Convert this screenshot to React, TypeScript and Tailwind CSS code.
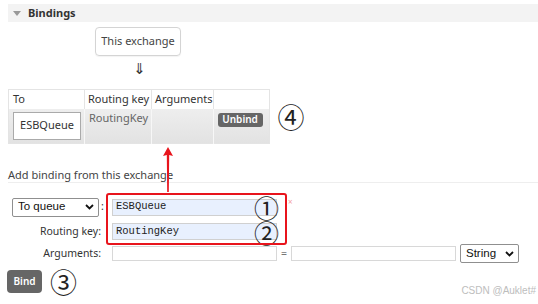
import React from 'react';

const font = { fontFamily: '"Noto Sans", "Open Sans", sans-serif' };
const mono = { fontFamily: '"Liberation Mono", monospace' };
const arial = { fontFamily: '"Liberation Sans", Arial, sans-serif' };

const Circled = ({ n, className }: { n: string; className?: string }) => (
  <span
    className={`inline-flex items-center justify-center text-[#222] leading-none ${className ?? ''}`}
    style={{ fontFamily: '"Noto Sans CJK SC", "Noto Sans", sans-serif' }}
  >
    {n}
  </span>
);

const Chevron = () => (
  <svg width="9" height="6" viewBox="0 0 9 6" className="shrink-0">
    <path d="M1 1 L4.5 4.5 L8 1" fill="none" stroke="#111" strokeWidth="1.8" />
  </svg>
);

export default function App() {
  return (
    <div
      className="relative w-[538px] h-[304px] bg-white overflow-hidden text-[#333]"
      style={font}
    >
      {/* section header */}
      <div className="mt-[4px] ml-[8px] h-[18px] bg-[#f3f3f3] flex items-center pl-[5px]">
        <span className="w-0 h-0 border-l-[4px] border-r-[4px] border-t-[5px] border-l-transparent border-r-transparent border-t-[#999] mr-[7px]" />
        <span className="text-[11px] font-bold text-[#333]">Bindings</span>
      </div>

      {/* this exchange */}
      <div className="ml-[95px] mt-[5px] w-[86px] h-[29px] border border-[#d4d4d4] rounded-[4px] flex items-center justify-center text-[11px] text-[#444] shadow-[0_1px_1px_rgba(0,0,0,0.05)]">
        This exchange
      </div>
      <div className="ml-[133px] mt-[5px] h-[16px] text-[15px] leading-[16px] text-[#333]" style={{ fontFamily: '"DejaVu Sans", sans-serif' }}>⇓</div>

      {/* bindings table */}
      <div className="flex items-center mt-[12px] ml-[8px]">
        <table className="border-collapse text-[11px] border border-[#e4e4e4]">
          <thead>
            <tr className="h-[19px] bg-white">
              <th className="w-[76px] text-left font-normal pl-[4px] border-r border-[#e4e4e4]">To</th>
              <th className="w-[67px] text-left font-normal pl-[3px] border-r border-[#e4e4e4] whitespace-nowrap">Routing key</th>
              <th className="w-[61px] text-left font-normal pl-[3px] border-r border-[#e4e4e4]">Arguments</th>
              <th className="w-[56px]"></th>
            </tr>
          </thead>
          <tbody>
            <tr className="h-[35px] bg-[linear-gradient(#eeeeee,#e2e2e2)] align-top">
              <td className="pl-[4px] pt-[3px] border-r border-[#f7f7f7]">
                <div className="w-[68px] h-[28px] bg-white border border-[#aaa] flex items-center justify-center text-[11px] text-[#333]">
                  ESBQueue
                </div>
              </td>
              <td className="pl-[4px] pt-[1px] text-[#666] border-r border-[#f7f7f7]">RoutingKey</td>
              <td className="border-r border-[#f7f7f7]"></td>
              <td className="pl-[4px] pt-[4px]">
                <div className="w-[45px] h-[14px] bg-[#666] rounded-[3px] text-white font-semibold text-[10px] flex items-center justify-center">
                  Unbind
                </div>
              </td>
            </tr>
          </tbody>
        </table>
        <Circled n="④" className="ml-[8px] h-[20px] text-[27px]" />
      </div>

      {/* add binding */}
      <div className="mt-[25px] ml-[8px] h-[14px] leading-[12px] border-b border-[#eeeeee] text-[11px] text-[#444]">
        Add binding from this exchange
      </div>

      <div className="mt-[14px] ml-[12px] text-[10.5px]">
        <div className="flex items-center h-[20px]">
          <div className="w-[87px] h-[19px] border border-[#8f8f8f] rounded-[2px] flex items-center justify-between pl-[5px] pr-[4px] text-[11.5px] text-[#111]" style={arial}>
            <span>To queue</span>
            <Chevron />
          </div>
          <span className="ml-[2px] w-[11px]">:</span>
          <div className="relative w-[165px] h-[17px] bg-[#e8f0fe] border border-[#d0d0d0] flex items-center pl-[3px] text-[10.5px] text-[#222]" style={mono}>
            ESBQueue
            <Circled n="①" className="absolute right-[-3px] top-[-2px] h-[20px] text-[25px]" />
          </div>
        </div>
        <div className="flex items-center h-[19px] mt-[5px]">
          <span className="w-[90px] text-right pr-[1px]">Routing key:</span>
          <span className="w-[10px]" />
          <div className="relative w-[165px] h-[17px] bg-[#e8f0fe] border border-[#d0d0d0] flex items-center pl-[3px] text-[10.5px] text-[#222]" style={mono}>
            RoutingKey
            <Circled n="②" className="absolute right-[-3px] top-[-2px] h-[20px] text-[25px]" />
          </div>
        </div>
        <div className="flex items-center h-[19px] mt-[3px]">
          <span className="w-[90px] text-right pr-[1px]">Arguments:</span>
          <span className="w-[10px]" />
          <div className="w-[165px] h-[15px] border border-[#d8d8d8]" />
          <span className="w-[14px] text-center text-[#777]">=</span>
          <div className="w-[165px] h-[15px] border border-[#d8d8d8]" />
          <div className="ml-[4px] w-[59px] h-[19px] border border-[#8f8f8f] rounded-[2px] flex items-center justify-between pl-[5px] pr-[4px] text-[11.5px] text-[#111]" style={arial}>
            <span>String</span>
            <Chevron />
          </div>
        </div>
      </div>

      <div className="flex items-center h-[23px] mt-[7px] ml-[7px]">
        <div className="w-[35px] h-[23px] bg-[#666] rounded-[4px] text-white font-semibold text-[10px] flex items-center justify-center">
          Bind
        </div>
        <Circled n="③" className="ml-[8px] h-[20px] text-[27px]" />
      </div>

      {/* annotations */}
      <div className="absolute left-[106px] top-[193px] w-[181px] h-[52px] border-2 border-[#e8141c] rounded-[3px]" />
      <span className="absolute left-[288px] top-[196px] text-[8px] text-[#f3a0a0]">×</span>
      <svg className="absolute left-[162px] top-[146px]" width="12" height="46" viewBox="0 0 12 46">
        <path d="M6 1 L11 10 L7.2 9 L6.8 46 L5.2 46 L4.8 9 L1 10 Z" fill="#e8141c" />
      </svg>

      <div className="absolute right-[2px] bottom-[6px] text-[10px] text-[#bdbdbd]" style={arial}>
        CSDN @Auklet#
      </div>
    </div>
  );
}
